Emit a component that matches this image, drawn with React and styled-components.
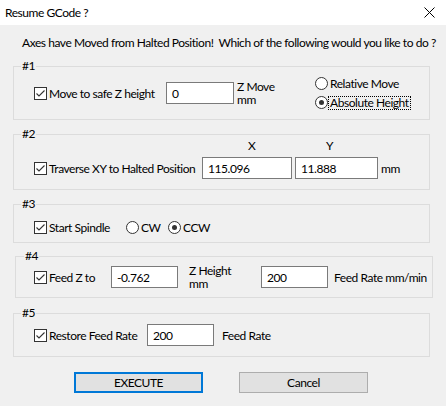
import React from 'react';
import styled, { createGlobalStyle } from 'styled-components';

const GlobalStyle = createGlobalStyle`
  html, body {
    margin: 0;
    padding: 0;
    background: #f0f0f0;
  }
  body {
    font-family: "Segoe UI", Lato, "Noto Sans", sans-serif;
    font-size: 12px;
    letter-spacing: -0.45px;
    color: #000;
  }
`;

const Window = styled.div`
  width: 446px;
  height: 406px;
  background: #f0f0f0;
  display: flex;
  flex-direction: column;
  overflow: hidden;
`;

const TitleBar = styled.div`
  height: 25px;
  flex-shrink: 0;
  background: #fff;
  display: flex;
  align-items: center;
  justify-content: space-between;
  padding: 0 11px 0 5px;
  line-height: 16px;
`;

const Body = styled.div`
  padding-top: 10px;
  display: flex;
  flex-direction: column;
`;

const Intro = styled.div`
  margin-left: 22px;
  line-height: 16px;
  white-space: pre;
`;

const Group = styled.div`
  position: relative;
  box-sizing: border-box;
  width: ${p => p.$w || 417}px;
  height: ${p => p.$h}px;
  margin: ${p => p.$mt}px 0 0 ${p => p.$ml || 13}px;
  border: 1px solid #dcdcdc;
  padding: ${p => p.$pad || '0 0 0 20px'};
  display: flex;
  align-items: ${p => p.$align || 'center'};
`;

const Legend = styled.span`
  position: absolute;
  top: -9px;
  left: ${p => p.$left || 7}px;
  padding: 0 1px;
  line-height: 16px;
  background: #f0f0f0;
`;

const CheckItem = styled.label`
  display: flex;
  align-items: center;
  gap: 2px;
  height: 22px;
  width: ${p => p.$w}px;
  flex-shrink: 0;
  white-space: nowrap;
`;

const Box = styled.span`
  width: 13px;
  height: 13px;
  box-sizing: border-box;
  border: 1px solid #333;
  background: #fff;
  display: flex;
  align-items: center;
  justify-content: center;
  flex-shrink: 0;
`;

const RadioItem = styled.label`
  display: flex;
  align-items: center;
  width: ${p => (p.$w ? `${p.$w}px` : 'auto')};
  flex-shrink: 0;
  white-space: nowrap;
`;

const Circle = styled.span`
  width: 13px;
  height: 13px;
  box-sizing: border-box;
  border: 1px solid #333;
  border-radius: 50%;
  background: #fff;
  display: flex;
  align-items: center;
  justify-content: center;
  flex-shrink: 0;

  &::after {
    content: '';
    display: ${p => (p.$on ? 'block' : 'none')};
    width: 5px;
    height: 5px;
    border-radius: 50%;
    background: #333;
  }
`;

const RadioText = styled.span`
  line-height: 12px;
  padding: 0 1px;
  border: 1px dotted ${p => (p.$focus ? '#000' : 'transparent')};
`;

const RadioColumn = styled.div`
  display: flex;
  flex-direction: column;
  gap: 5px;
`;

const TextInput = styled.div`
  box-sizing: border-box;
  width: ${p => p.$w}px;
  height: 22px;
  flex-shrink: 0;
  background: #fff;
  border: 1px solid #7a7a7a;
  padding-left: 5px;
  display: flex;
  align-items: center;
`;

const StackLabel = styled.div`
  margin-left: ${p => p.$ml}px;
  width: ${p => p.$w}px;
  flex-shrink: 0;
  line-height: 13px;
  white-space: nowrap;
`;

const Unit = styled.div`
  margin-left: ${p => p.$ml}px;
  height: 22px;
  display: flex;
  align-items: center;
  white-space: nowrap;
`;

const AxisColumn = styled.div`
  display: flex;
  flex-direction: column;
  margin-left: ${p => p.$ml || 0}px;
`;

const AxisLabel = styled.div`
  line-height: 16px;
  padding-left: ${p => p.$pl}px;
  margin-bottom: 3px;
`;

const ButtonRow = styled.div`
  margin-top: 15px;
  padding-left: 74px;
  display: flex;
  gap: 36px;
`;

const Button = styled.div`
  box-sizing: border-box;
  width: 129px;
  height: 21px;
  background: #e1e1e1;
  border: ${p => (p.$primary ? '2px solid #0078d7' : '1px solid #adadad')};
  display: flex;
  align-items: center;
  justify-content: center;
`;

const Check = ({ w, children }) => (
  <CheckItem $w={w}>
    <Box>
      <svg width="11" height="11" viewBox="0 0 11 11">
        <path d="M1.5 5.5 L4 8 L9.5 2.5" fill="none" stroke="#333" strokeWidth="1.1" />
      </svg>
    </Box>
    {children}
  </CheckItem>
);

const Radio = ({ on, focus, w, children }) => (
  <RadioItem $w={w}>
    <Circle $on={on} />
    <RadioText $focus={focus}>{children}</RadioText>
  </RadioItem>
);

export default function App() {
  return (
    <>
      <GlobalStyle />
      <Window>
        <TitleBar>
          <span>Resume GCode ?</span>
          <svg width="11" height="11" viewBox="0 0 11 11">
            <path d="M0.5 0.5 L10.5 10.5 M10.5 0.5 L0.5 10.5" stroke="#000" strokeWidth="1" />
          </svg>
        </TitleBar>
        <Body>
          <Intro>Axes have Moved from Halted Position!  Which of the following would you like to do ?</Intro>

          <Group $mt={15} $h={54}>
            <Legend>#1</Legend>
            <Check w={132}>Move to safe Z height</Check>
            <TextInput $w={68}>0</TextInput>
            <StackLabel $ml={3} $w={78}>
              Z Move
              <br />
              mm
            </StackLabel>
            <RadioColumn>
              <Radio>Relative Move</Radio>
              <Radio on focus>Absolute Height</Radio>
            </RadioColumn>
          </Group>

          <Group $mt={14} $h={56} $align="flex-end" $pad="0 0 10px 20px">
            <Legend>#2</Legend>
            <Check w={168}>Traverse XY to Halted Position</Check>
            <AxisColumn>
              <AxisLabel $pl={46}>X</AxisLabel>
              <TextInput $w={90}>115.096</TextInput>
            </AxisColumn>
            <AxisColumn $ml={3}>
              <AxisLabel $pl={31}>Y</AxisLabel>
              <TextInput $w={83}>11.888</TextInput>
            </AxisColumn>
            <Unit $ml={3}>mm</Unit>
          </Group>

          <Group $mt={14} $h={39} $pad="8px 0 0 20px">
            <Legend>#3</Legend>
            <Check w={92}>Start Spindle</Check>
            <Radio w={42}>CW</Radio>
            <Radio on>CCW</Radio>
          </Group>

          <Group $mt={13} $h={42} $ml={15} $w={418} $pad="0 0 0 18px">
            <Legend $left={8}>#4</Legend>
            <Check w={77}>Feed Z to</Check>
            <TextInput $w={67}>-0.762</TextInput>
            <StackLabel $ml={11} $w={72}>
              Z Height
              <br />
              mm
            </StackLabel>
            <TextInput $w={67}>200</TextInput>
            <Unit $ml={6}>Feed Rate mm/min</Unit>
          </Group>

          <Group $mt={15} $h={44}>
            <Legend>#5</Legend>
            <Check w={113}>Restore Feed Rate</Check>
            <TextInput $w={67}>200</TextInput>
            <Unit $ml={8}>Feed Rate</Unit>
          </Group>

          <ButtonRow>
            <Button $primary>EXECUTE</Button>
            <Button>Cancel</Button>
          </ButtonRow>
        </Body>
      </Window>
    </>
  );
}
